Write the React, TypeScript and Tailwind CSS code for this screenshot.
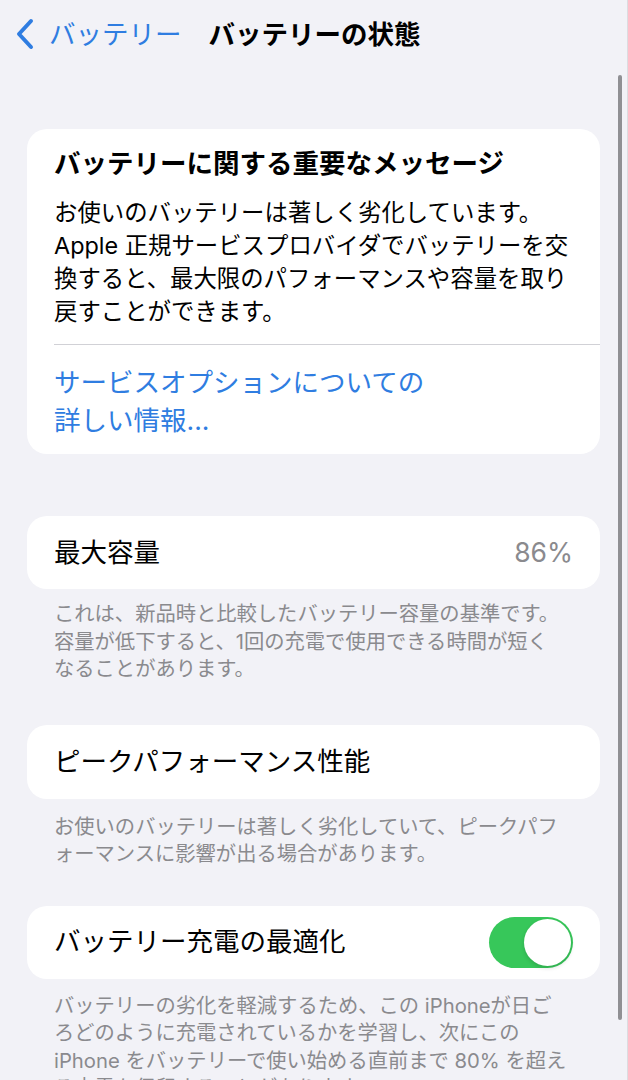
const FONT = "font-[family-name:Inter,'Noto_Sans_CJK_JP',sans-serif]";

function Chevron() {
  return (
    <svg width="20" height="32" viewBox="0 0 20 32" fill="none">
      <path d="M16 3 L4 16 L16 29" stroke="#2f7de1" strokeWidth="4" strokeLinecap="round" strokeLinejoin="round" />
    </svg>
  );
}

function Toggle() {
  return (
    <div className="relative w-[84px] h-[51px] rounded-full bg-[#37c75a]">
      <div className="absolute right-[2px] top-[2px] w-[47px] h-[47px] rounded-full bg-white shadow-[0_2px_4px_rgba(0,0,0,0.15)]" />
    </div>
  );
}

function Footer({ lines, className }: { lines: string[]; className?: string }) {
  return (
    <div className={`px-[27px] text-[20.3px] leading-[27.5px] text-[#8a8a8e] whitespace-nowrap ${className ?? ''}`}>
      {lines.map((l) => (
        <div key={l}>{l}</div>
      ))}
    </div>
  );
}

export default function App() {
  return (
    <div className={`relative h-[1080px] overflow-hidden bg-[#f2f2f7] ${FONT}`}>
      {/* nav */}
      <div className="flex items-center h-[68px] pl-[15px]">
        <Chevron />
        <span className="ml-[14px] text-[26.5px] leading-[34px] text-[#2f7de1]">バッテリー</span>
        <span className="ml-[27px] text-[26.5px] leading-[34px] font-bold text-black">バッテリーの状態</span>
      </div>

      <div className="pl-[27px] pr-[28px]">
        {/* message card */}
        <div className="mt-[61px] rounded-[20px] bg-white pl-[27px] pt-[17px] pb-[15px]">
          <div className="pr-[27px] text-[26.5px] leading-[34px] font-bold text-black">
            バッテリーに関する重要なメッセージ
          </div>
          <div className="mt-[16px] pr-[20px] text-[23.4px] leading-[33px] text-black whitespace-nowrap">
            <div>お使いのバッテリーは著しく劣化しています。</div>
            <div>Apple 正規サービスプロバイダでバッテリーを交</div>
            <div>換すると、最大限のパフォーマンスや容量を取り</div>
            <div>戻すことができます。</div>
          </div>
          <div className="mt-[16px] h-px bg-[#d1d1d6]" />
          <div className="mt-[18px] text-[26.5px] leading-[38px] text-[#2f7de1]">
            <div>サービスオプションについての</div>
            <div>詳しい情報...</div>
          </div>
        </div>

        {/* max capacity */}
        <div className="mt-[62px] h-[73px] rounded-[20px] bg-white px-[27px] flex items-center justify-between">
          <span className="text-[26.5px] text-black">最大容量</span>
          <span className="text-[26.5px] text-[#8a8a8e]">86%</span>
        </div>
        <Footer
          className="mt-[11px]"
          lines={[
            'これは、新品時と比較したバッテリー容量の基準です。',
            '容量が低下すると、1回の充電で使用できる時間が短く',
            'なることがあります。',
          ]}
        />

        {/* peak performance */}
        <div className="mt-[42px] h-[74px] rounded-[20px] bg-white px-[27px] flex items-center">
          <span className="text-[26.5px] text-black">ピークパフォーマンス性能</span>
        </div>
        <Footer
          className="mt-[14px]"
          lines={[
            'お使いのバッテリーは著しく劣化していて、ピークパフ',
            'ォーマンスに影響が出る場合があります。',
          ]}
        />

        {/* optimized charging */}
        <div className="mt-[38px] h-[73px] rounded-[20px] bg-white pl-[27px] pr-[27px] flex items-center justify-between">
          <span className="text-[26.5px] text-black">バッテリー充電の最適化</span>
          <Toggle />
        </div>
        <Footer
          className="mt-[13px]"
          lines={[
            'バッテリーの劣化を軽減するため、この iPhoneが日ご',
            'ろどのように充電されているかを学習し、次にこの',
            'iPhone をバッテリーで使い始める直前まで 80% を超え',
            'る充電を保留することがあります。',
          ]}
        />
      </div>

      {/* scroll indicator */}
      <div className="absolute left-[618px] top-[75px] w-[4px] h-[945px] rounded-full bg-[#909094]" />
      <div className="absolute right-0 top-0 w-px h-full bg-[#dcdce0]" />
    </div>
  );
}
